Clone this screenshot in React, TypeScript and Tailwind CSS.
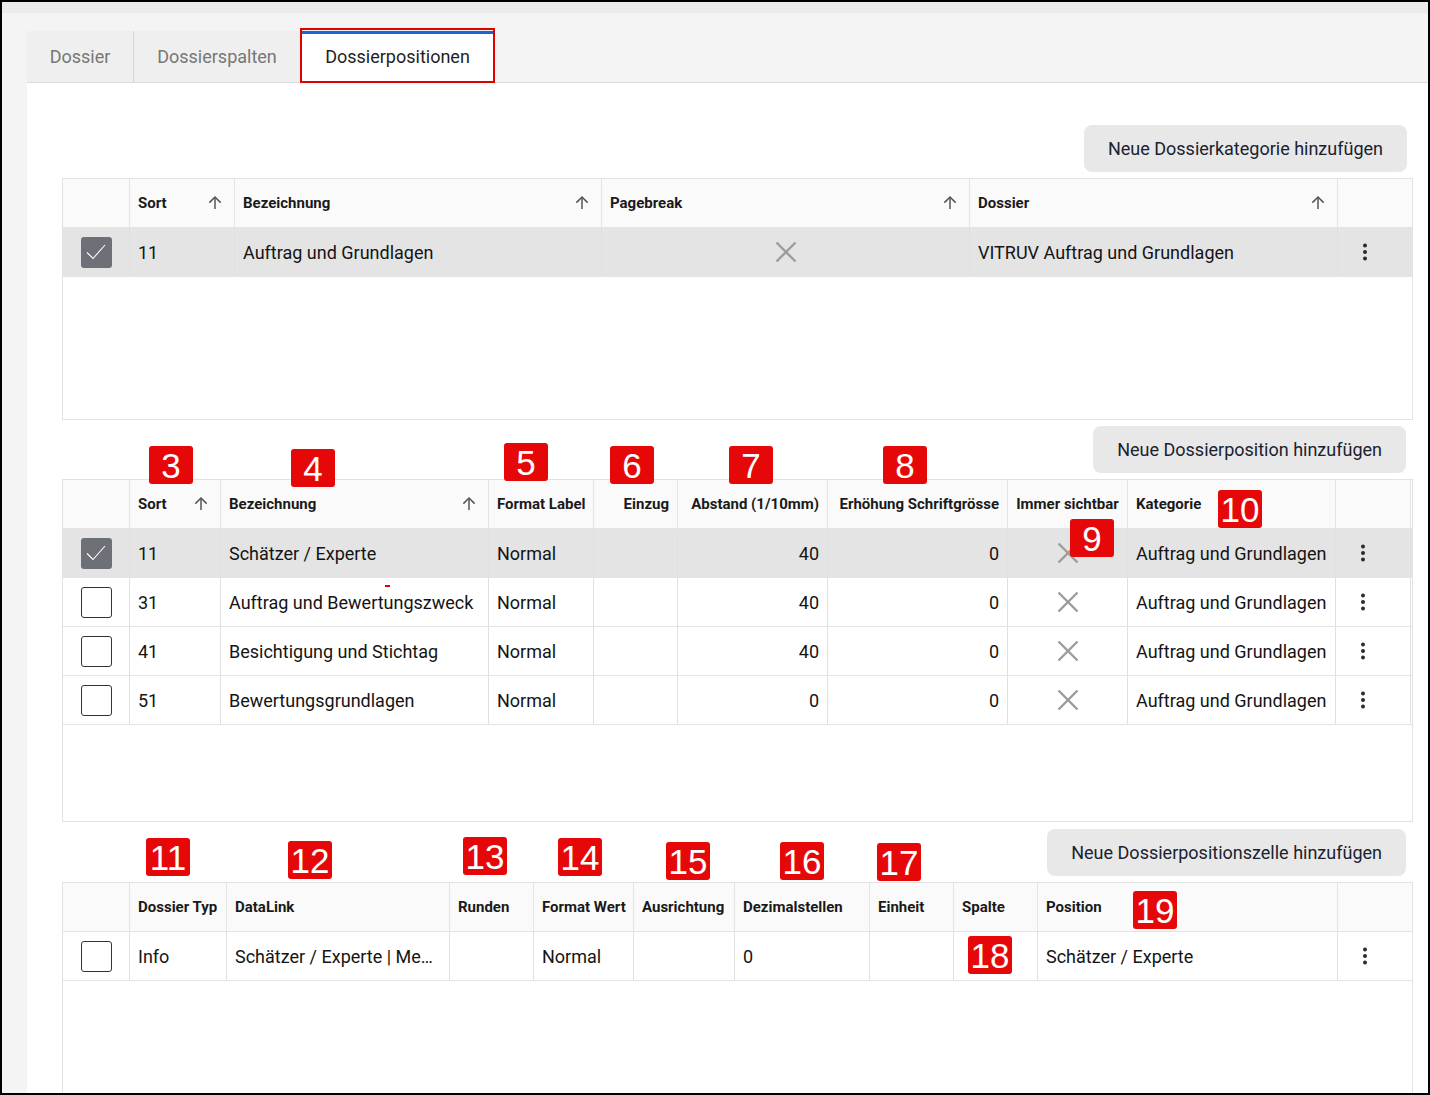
import type { ReactNode } from 'react'

type Align = 'left' | 'right' | 'center'

type Column = {
  label: string
  align?: Align
  sort?: boolean
}

type TableProps = {
  grid: string
  columns: Column[]
  rows: { selected?: boolean; cells: ReactNode[] }[]
  height: string
}

const alignClass: Record<Align, string> = {
  left: 'justify-start',
  right: 'justify-end',
  center: 'justify-center',
}

function SortArrow() {
  return (
    <svg width="18" height="18" viewBox="0 0 24 24" fill="none" stroke="#555" strokeWidth="2">
      <path d="M12 20V4.5" />
      <path d="M4.5 11.5 12 4l7.5 7.5" />
    </svg>
  )
}

function Kebab() {
  return (
    <svg width="6" height="20" viewBox="0 0 6 20" fill="#2b2b2b">
      <circle cx="3" cy="3.5" r="2" />
      <circle cx="3" cy="10" r="2" />
      <circle cx="3" cy="16.5" r="2" />
    </svg>
  )
}

function Checkbox({ checked }: { checked?: boolean }) {
  if (checked) {
    return (
      <div className="flex h-[31px] w-[31px] items-center justify-center rounded-[3px] bg-[#6d7177]">
        <svg width="24" height="24" viewBox="0 0 24 24" fill="none" stroke="#fff" strokeWidth="1.1">
          <path d="M3 12.5 9 18.5 21 5" />
        </svg>
      </div>
    )
  }
  return <div className="h-[31px] w-[31px] rounded-[3px] border border-[#333] bg-white" />
}

function Cross() {
  return (
    <svg width="22" height="22" viewBox="0 0 22 22" fill="none" stroke="#9c9c9c" strokeWidth="2.4">
      <path d="M1.5 1.5 20.5 20.5" />
      <path d="M20.5 1.5 1.5 20.5" />
    </svg>
  )
}

function DataTable({ grid, columns, rows, height }: TableProps) {
  return (
    <div className={`overflow-hidden border border-[#e2e2e2] bg-white ${height}`}>
      <div className={`grid h-[49px] border-b border-[#e4e4e4] bg-[#fafafa] ${grid}`}>
        {columns.map((col, i) => (
          <div
            key={i}
            className={`flex items-center px-2 text-[15px] font-bold text-[#1a1a1a] ${i > 0 ? 'border-l border-[#e4e4e4]' : ''} ${col.sort ? 'justify-between pr-[10px]' : alignClass[col.align ?? 'left']}`}
          >
            <span className="whitespace-nowrap">{col.label}</span>
            {col.sort ? <SortArrow /> : null}
          </div>
        ))}
      </div>
      {rows.map((row, r) => (
        <div
          key={r}
          className={`grid h-[49px] border-b border-[#e4e4e4] ${row.selected ? 'bg-[#e4e4e4]' : 'bg-white'} ${grid}`}
        >
          {row.cells.map((cell, i) => {
            const col = columns[i]
            const align = i === 0 ? 'center' : col.align ?? 'left'
            return (
              <div
                key={i}
                className={`flex items-center overflow-hidden px-2 text-[18px] text-[#141414] ${i > 0 ? 'border-l border-[#e0e0e0]' : ''} ${alignClass[align]}`}
              >
                {typeof cell === 'string' ? <span className="whitespace-nowrap">{cell}</span> : cell}
              </div>
            )
          })}
        </div>
      ))}
    </div>
  )
}

function ActionButton({ label, className }: { label: string; className?: string }) {
  return (
    <div className={`flex justify-end ${className ?? ''}`}>
      <button className="flex h-[47px] items-center rounded-lg bg-[#e8e8e8] px-6 text-[18px] text-[#1a2230]">
        {label}
      </button>
    </div>
  )
}

function RowMenu() {
  return (
    <div className="pl-[16px]">
      <Kebab />
    </div>
  )
}

const badges = [
  { n: '3', cls: 'left-[149px] top-[446px]' },
  { n: '4', cls: 'left-[291px] top-[449px]' },
  { n: '5', cls: 'left-[504px] top-[443px]' },
  { n: '6', cls: 'left-[610px] top-[446px]' },
  { n: '7', cls: 'left-[729px] top-[446px]' },
  { n: '8', cls: 'left-[883px] top-[446px]' },
  { n: '9', cls: 'left-[1070px] top-[519px]' },
  { n: '10', cls: 'left-[1218px] top-[490px]' },
  { n: '11', cls: 'left-[146px] top-[838px]' },
  { n: '12', cls: 'left-[288px] top-[841px]' },
  { n: '13', cls: 'left-[463px] top-[837px]' },
  { n: '14', cls: 'left-[558px] top-[838px]' },
  { n: '15', cls: 'left-[666px] top-[842px]' },
  { n: '16', cls: 'left-[780px] top-[842px]' },
  { n: '17', cls: 'left-[877px] top-[843px]' },
  { n: '18', cls: 'left-[968px] top-[936px]' },
  { n: '19', cls: 'left-[1133px] top-[891px]' },
]

export default function App() {
  const kategorie = 'Auftrag und Grundlagen'

  return (
    <div className="relative h-[1095px] w-[1430px] overflow-hidden bg-[#f4f4f4] font-[Roboto,'Liberation_Sans',sans-serif]">
      <div className="h-[13px] bg-[#ebebeb]" />
      <div className="pl-[27px] pt-[18px]">
        <div className="flex h-[52px] border-b border-[#dadada] text-[18px]">
          <div className="flex w-[106px] items-center justify-center bg-[#efefef] text-[#777]">Dossier</div>
          <div className="flex w-[167px] items-center justify-center border-l border-[#d6d6d6] bg-[#efefef] text-[#777]">
            Dossierspalten
          </div>
          <div className="-mb-px flex w-[195px] items-center justify-center border-t-[3px] border-[#1f63d2] bg-white pb-[4px] text-[#1f1f1f]">
            Dossierpositionen
          </div>
        </div>

        <div className="h-[1100px] bg-white pl-[35px] pr-[17px] pt-[42px]">
          <ActionButton label="Neue Dossierkategorie hinzufügen" className="mb-[6px] pr-[6px]" />
          <DataTable
            height="h-[242px]"
            grid="grid-cols-[66px_105px_367px_368px_368px_1fr]"
            columns={[
              { label: '' },
              { label: 'Sort', sort: true },
              { label: 'Bezeichnung', sort: true },
              { label: 'Pagebreak', sort: true },
              { label: 'Dossier', sort: true },
              { label: '' },
            ]}
            rows={[
              {
                selected: true,
                cells: [
                  <Checkbox checked />,
                  '11',
                  'Auftrag und Grundlagen',
                  <div className="flex w-full justify-center"><Cross /></div>,
                  'VITRUV Auftrag und Grundlagen',
                  <RowMenu />,
                ],
              },
            ]}
          />

          <ActionButton label="Neue Dossierposition hinzufügen" className="mb-[6px] mt-[6px] pr-[7px]" />
          <DataTable
            height="h-[343px]"
            grid="grid-cols-[66px_91px_268px_105px_84px_150px_180px_120px_208px_75px_1fr]"
            columns={[
              { label: '' },
              { label: 'Sort', sort: true },
              { label: 'Bezeichnung', sort: true },
              { label: 'Format Label' },
              { label: 'Einzug', align: 'right' },
              { label: 'Abstand (1/10mm)', align: 'right' },
              { label: 'Erhöhung Schriftgrösse', align: 'right' },
              { label: 'Immer sichtbar', align: 'center' },
              { label: 'Kategorie' },
              { label: '' },
              { label: '' },
            ]}
            rows={[
              { selected: true, sort: '11', name: 'Schätzer / Experte', abstand: '40', checked: true },
              { sort: '31', name: 'Auftrag und Bewertungszweck', abstand: '40' },
              { sort: '41', name: 'Besichtigung und Stichtag', abstand: '40' },
              { sort: '51', name: 'Bewertungsgrundlagen', abstand: '0' },
            ].map((r) => ({
              selected: r.selected,
              cells: [
                <Checkbox checked={r.checked} />,
                r.sort,
                r.name,
                'Normal',
                '',
                r.abstand,
                '0',
                <Cross />,
                kategorie,
                <RowMenu />,
                '',
              ],
            }))}
          />

          <ActionButton label="Neue Dossierpositionszelle hinzufügen" className="mb-[6px] mt-[7px] pr-[7px]" />
          <DataTable
            height="h-[400px]"
            grid="grid-cols-[66px_97px_223px_84px_100px_101px_135px_84px_84px_300px_1fr]"
            columns={[
              { label: '' },
              { label: 'Dossier Typ' },
              { label: 'DataLink' },
              { label: 'Runden' },
              { label: 'Format Wert' },
              { label: 'Ausrichtung' },
              { label: 'Dezimalstellen' },
              { label: 'Einheit' },
              { label: 'Spalte' },
              { label: 'Position' },
              { label: '' },
            ]}
            rows={[
              {
                cells: [
                  <Checkbox />,
                  'Info',
                  'Schätzer / Experte | Me…',
                  '',
                  'Normal',
                  '',
                  '0',
                  '',
                  '',
                  'Schätzer / Experte',
                  <RowMenu />,
                ],
              },
            ]}
          />
        </div>
      </div>

      {/* annotations */}
      <div className="pointer-events-none absolute inset-0 border-2 border-black" />
      <div className="absolute left-[300px] top-[28px] h-[55px] w-[195px] border-2 border-[#e00000]" />
      <div className="absolute left-[385px] top-[585px] h-[2px] w-[5px] bg-[#e00000]" />
      {badges.map((b) => (
        <div
          key={b.n}
          className={`absolute flex h-[38px] w-[44px] items-center justify-center rounded-[3px] bg-[#e60808] font-['Liberation_Sans',Arial,sans-serif] text-[35px] leading-none text-white ${b.cls}`}
        >
          {b.n}
        </div>
      ))}
    </div>
  )
}
